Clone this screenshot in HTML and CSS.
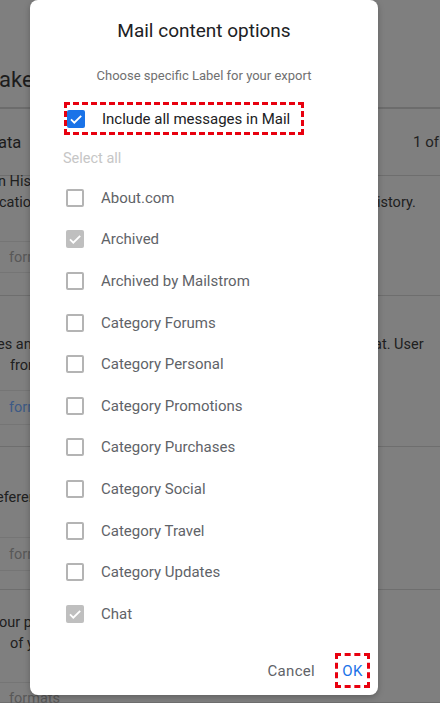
FILE: index.html
```html
<!DOCTYPE html>
<html lang="en">
<head>
<meta charset="utf-8">
<title>Mail content options</title>
<link rel="stylesheet" href="styles.css">
</head>
<body>
<div class="page" aria-hidden="true">
  <header class="pg-head"><span class="pg-title">akeout</span></header>
  <section class="pg-row pg-data">
    <span class="pg-label">ata</span>
    <span class="pg-step">1 of 2</span>
  </section>
  <section class="pg-row pg-r1">
    <div class="pg-line l1">n History data from your</div>
    <div class="pg-line l2"><span>cation data you have</span><span>istory.</span></div>
    <div class="pg-fmt"><span class="pg-btn">formats</span></div>
  </section>
  <section class="pg-row pg-r2">
    <div class="pg-line l3"><span>es and the data</span><span>at. User</span></div>
    <div class="pg-line l4">from your account</div>
    <div class="pg-fmt"><span class="pg-btn blue">formats</span></div>
  </section>
  <section class="pg-row pg-r3">
    <div class="pg-line l5">eferences</div>
    <div class="pg-fmt"><span class="pg-btn">formats</span></div>
  </section>
  <section class="pg-row pg-r4">
    <div class="pg-line l6">our profile</div>
    <div class="pg-line l7">of your account</div>
    <div class="pg-fmt last"><span class="pg-btn">formats</span></div>
  </section>
</div>

<div class="dialog" role="dialog" aria-labelledby="dlg-title">
  <h1 class="dlg-title" id="dlg-title">Mail content options</h1>
  <p class="dlg-sub">Choose specific Label for your export</p>

  <div class="include-wrap">
    <label class="include">
      <span class="cb cb-on"><svg viewBox="0 0 18 18"><path d="M4 9.4l3.3 3.3L14.2 5.8"/></svg></span>
      <span class="include-text">Include all messages in Mail</span>
    </label>
  </div>

  <div class="select-all">Select all</div>

  <ul class="labels">
    <li><span class="cb"></span><span>About.com</span></li>
    <li><span class="cb cb-dis"><svg viewBox="0 0 18 18"><path d="M4 9.4l3.3 3.3L14.2 5.8"/></svg></span><span>Archived</span></li>
    <li><span class="cb"></span><span>Archived by Mailstrom</span></li>
    <li><span class="cb"></span><span>Category Forums</span></li>
    <li><span class="cb"></span><span>Category Personal</span></li>
    <li><span class="cb"></span><span>Category Promotions</span></li>
    <li><span class="cb"></span><span>Category Purchases</span></li>
    <li><span class="cb"></span><span>Category Social</span></li>
    <li><span class="cb"></span><span>Category Travel</span></li>
    <li><span class="cb"></span><span>Category Updates</span></li>
    <li><span class="cb cb-dis"><svg viewBox="0 0 18 18"><path d="M4 9.4l3.3 3.3L14.2 5.8"/></svg></span><span>Chat</span></li>
  </ul>

  <div class="actions">
    <button class="btn btn-cancel" type="button">Cancel</button>
    <span class="ok-wrap"><button class="btn btn-ok" type="button">OK</button></span>
  </div>
</div>
</body>
</html>
```

FILE: styles.css
```css
html, body {
  margin: 0;
  padding: 0;
}
body {
  width: 440px;
  height: 703px;
  overflow: hidden;
  background: #7f7f7f;
  font-family: Roboto, "Liberation Sans", Arial, sans-serif;
  position: relative;
}

/* ---------- dimmed page behind the dialog ---------- */
.page {
  color: #1c1c1c;
  font-size: 15px;
}
.pg-head {
  height: 107px;
  border-bottom: 2px solid #6c6c6c;
  box-sizing: content-box;
}
.pg-title {
  display: block;
  padding-top: 65px;
  font-size: 22px;
  line-height: 30px;
  margin-left: -1px;
  white-space: nowrap;
}
.pg-row {
  display: flow-root;
  border-bottom: 1px solid #6e6e6e;
  box-sizing: border-box;
  white-space: nowrap;
}
.pg-data {
  height: 67px;
  display: grid;
  grid-template-columns: 413px auto;
  align-items: center;
}
.pg-label {
  margin-left: -2px;
  font-size: 16.5px;
}
.pg-step {
  color: #222;
  font-size: 15px;
}
.pg-r1 { height: 120px; padding-top: 0; }
.pg-r2 { height: 151px; padding-top: 38px; }
.pg-r3 { height: 143px; padding-top: 40px; }
.pg-r4 { height: 113px; padding-top: 22px; }

.pg-line {
  font-size: 14.5px;
  line-height: 21px;
  color: #202020;
  display: grid;
  grid-template-columns: 377px auto;
  overflow: hidden;
}
.pg-line span:first-child { overflow: hidden; }
.l1 { margin: -5px 0 0 -2px; display: block; }
.l2 { margin-left: -1px; }
.l2 span:last-child { margin-left: 1px; }
.l3 { margin-left: -3px; }
.l4 { margin-left: 10px; display: block; }
.l5 { margin-left: -4px; display: block; }
.l6 { margin-left: -1px; display: block; }
.l7 { margin-left: 10px; display: block; }

.pg-fmt {
  border-top: 1px solid #757575;
  border-bottom: 1px solid #757575;
  width: 100px;
  display: flex;
  align-items: center;
  box-sizing: border-box;
}
.pg-r1 .pg-fmt { margin-top: 28px; height: 32px; }
.pg-r2 .pg-fmt { margin-top: 14px; height: 35px; }
.pg-r3 .pg-fmt { margin-top: 29px; height: 34px; }
.pg-r4 .pg-fmt { margin-top: 28px; height: 40px; border-bottom: none; padding-bottom: 8px; }
.pg-btn {
  margin-left: 9px;
  font-size: 14.5px;
  color: #585858;
}
.pg-btn.blue { color: #3c5a86; }

/* ---------- dialog ---------- */
.dialog {
  position: absolute;
  left: 30px;
  top: 0;
  width: 348px;
  height: 695px;
  background: #fff;
  border-radius: 8px;
  box-shadow: 0 2px 6px rgba(0, 0, 0, 0.25);
  box-sizing: border-box;
  display: flex;
  flex-direction: column;
}
.dlg-title {
  margin: 19px 0 0;
  text-align: center;
  font-size: 19px;
  line-height: 24px;
  font-weight: 400;
  color: #202124;
}
.dlg-sub {
  margin: 25px 0 0;
  text-align: center;
  font-size: 13px;
  line-height: 16px;
  color: #707070;
}
.include-wrap {
  margin: 18px 0 0 34px;
  display: flex;
}
.include {
  display: flex;
  align-items: center;
  height: 33px;
  box-sizing: border-box;
  border: 3px dashed #e8000f;
  padding: 0 11px 0 0;
}
.include-text {
  margin-left: 17px;
  font-size: 15px;
  color: #202124;
}

.cb {
  width: 18px;
  height: 18px;
  box-sizing: border-box;
  border: 2px solid #b4b4b4;
  border-radius: 2px;
  flex: none;
  display: flex;
  align-items: center;
  justify-content: center;
}
.cb svg {
  width: 18px;
  height: 18px;
  fill: none;
  stroke: #fff;
  stroke-width: 1.8;
}
.cb-on {
  background: #1a73e8;
  border: none;
}
.cb-dis {
  background: #bfbfbf;
  border: none;
}

.select-all {
  margin: 14px 0 0 33px;
  font-size: 14.5px;
  line-height: 20px;
  color: #c6c6c6;
}

.labels {
  list-style: none;
  margin: 8px 0 0;
  padding: 0;
}
.labels li {
  display: flex;
  align-items: center;
  height: 41.6px;
  padding-left: 36px;
  font-size: 15px;
  color: #5f6368;
}
.labels li .cb + span { margin-left: 17px; }

.actions {
  margin-top: auto;
  margin-bottom: 7px;
  display: flex;
  justify-content: flex-end;
  align-items: center;
  padding-right: 8px;
}
.btn {
  font-family: inherit;
  background: none;
  border: none;
  padding: 0;
  font-size: 15px;
  font-weight: 400;
  letter-spacing: 0.3px;
  cursor: pointer;
}
.btn-cancel {
  color: #5f6368;
  margin-right: 20px;
}
.ok-wrap {
  display: flex;
  align-items: center;
  justify-content: center;
  width: 35px;
  height: 35px;
  box-sizing: border-box;
  border: 3px dashed #e8000f;
}
.btn-ok {
  color: #1a73e8;
}
```
